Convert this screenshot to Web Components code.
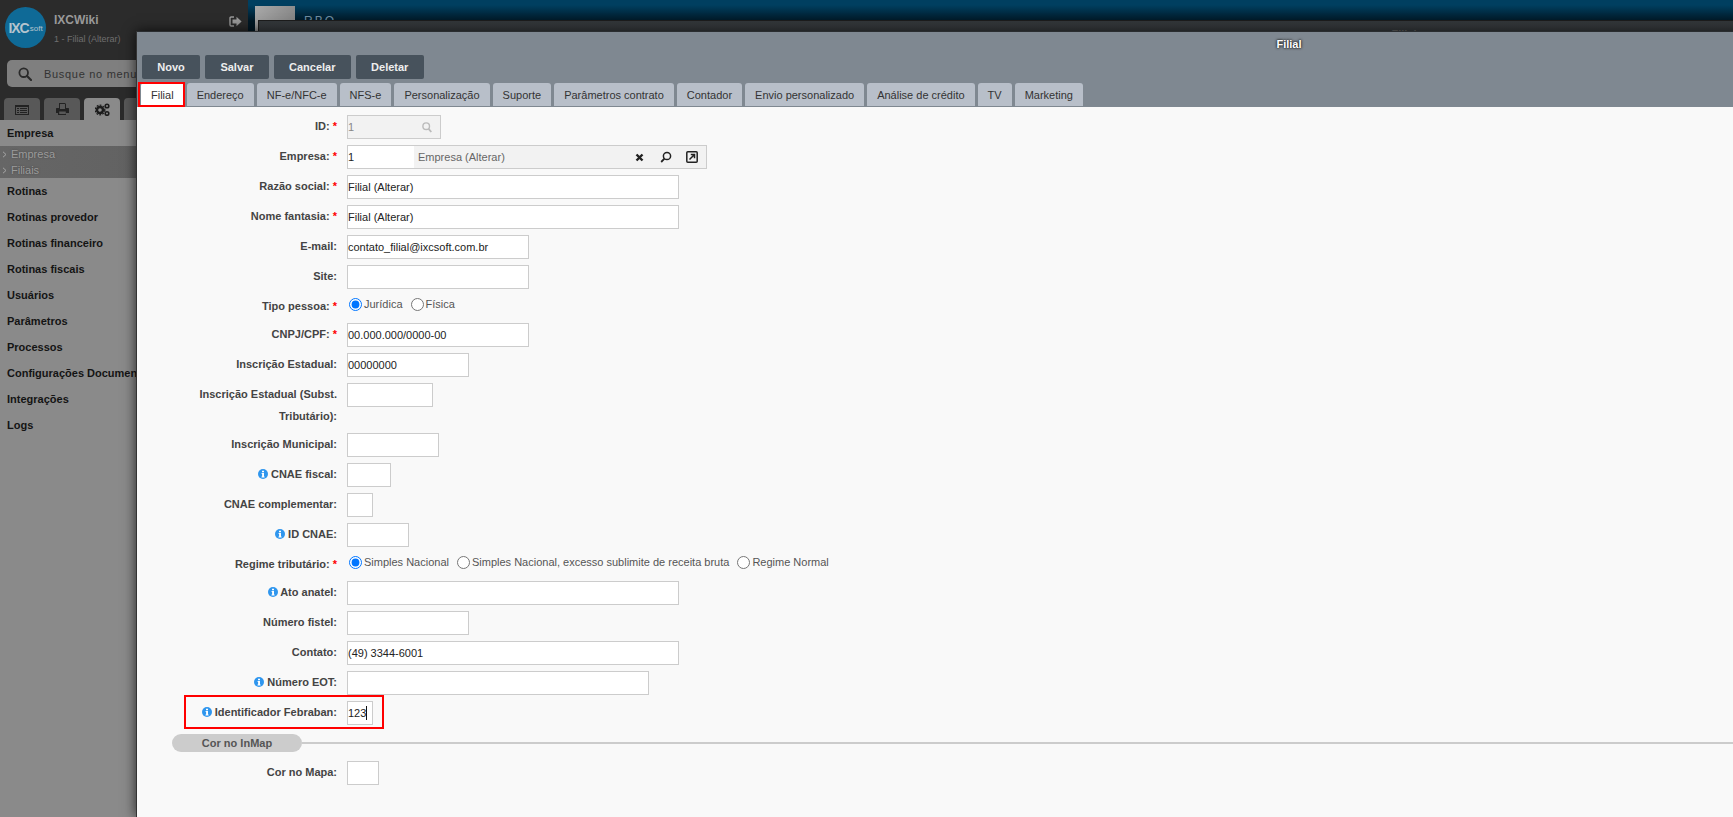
<!DOCTYPE html>
<html lang="pt-BR">
<head>
<meta charset="utf-8">
<title>Filial</title>
<style>
  html, body { margin: 0; height: 100%; overflow: hidden; background: #8a8a8a; }
  body { font: 11px "Liberation Sans", Arial, sans-serif; color: #333; display: flex; position: relative; }
</style>
</head>
<body>
<ixc-sidebar>
  <ixc-nav-item>Empresa</ixc-nav-item>
  <ixc-sub-list>
    <ixc-sub-item>Empresa</ixc-sub-item>
    <ixc-sub-item>Filiais</ixc-sub-item>
  </ixc-sub-list>
  <ixc-nav-item>Rotinas</ixc-nav-item>
  <ixc-nav-item>Rotinas provedor</ixc-nav-item>
  <ixc-nav-item>Rotinas financeiro</ixc-nav-item>
  <ixc-nav-item>Rotinas fiscais</ixc-nav-item>
  <ixc-nav-item>Usuários</ixc-nav-item>
  <ixc-nav-item>Parâmetros</ixc-nav-item>
  <ixc-nav-item>Processos</ixc-nav-item>
  <ixc-nav-item>Configurações Documentos</ixc-nav-item>
  <ixc-nav-item>Integrações</ixc-nav-item>
  <ixc-nav-item>Logs</ixc-nav-item>
</ixc-sidebar>
<ixc-topbar></ixc-topbar>
<ixc-back-window></ixc-back-window>

<ixc-dialog title="Filial">
  <ixc-button slot="actions">Novo</ixc-button>
  <ixc-button slot="actions">Salvar</ixc-button>
  <ixc-button slot="actions">Cancelar</ixc-button>
  <ixc-button slot="actions">Deletar</ixc-button>

  <ixc-tab slot="tabs" active>Filial</ixc-tab>
  <ixc-tab slot="tabs">Endereço</ixc-tab>
  <ixc-tab slot="tabs">NF-e/NFC-e</ixc-tab>
  <ixc-tab slot="tabs">NFS-e</ixc-tab>
  <ixc-tab slot="tabs">Personalização</ixc-tab>
  <ixc-tab slot="tabs">Suporte</ixc-tab>
  <ixc-tab slot="tabs">Parâmetros contrato</ixc-tab>
  <ixc-tab slot="tabs">Contador</ixc-tab>
  <ixc-tab slot="tabs">Envio personalizado</ixc-tab>
  <ixc-tab slot="tabs">Análise de crédito</ixc-tab>
  <ixc-tab slot="tabs">TV</ixc-tab>
  <ixc-tab slot="tabs">Marketing</ixc-tab>

  <ixc-row label="ID:" required><ixc-field w="94" readonly search>1</ixc-field></ixc-row>
  <ixc-row label="Empresa:" required><ixc-lookup code="1">Empresa (Alterar)</ixc-lookup></ixc-row>
  <ixc-row label="Razão social:" required><ixc-field w="332">Filial (Alterar)</ixc-field></ixc-row>
  <ixc-row label="Nome fantasia:" required><ixc-field w="332">Filial (Alterar)</ixc-field></ixc-row>
  <ixc-row label="E-mail:"><ixc-field w="182">contato_filial@ixcsoft.com.br</ixc-field></ixc-row>
  <ixc-row label="Site:"><ixc-field w="182"></ixc-field></ixc-row>
  <ixc-row label="Tipo pessoa:" required>
    <ixc-radio name="tipo" checked>Jurídica</ixc-radio>
    <ixc-radio name="tipo">Física</ixc-radio>
  </ixc-row>
  <ixc-row label="CNPJ/CPF:" required><ixc-field w="182">00.000.000/0000-00</ixc-field></ixc-row>
  <ixc-row label="Inscrição Estadual:"><ixc-field w="122">00000000</ixc-field></ixc-row>
  <ixc-row label="Inscrição Estadual (Subst. Tributário):"><ixc-field w="86"></ixc-field></ixc-row>
  <ixc-row label="Inscrição Municipal:"><ixc-field w="92"></ixc-field></ixc-row>
  <ixc-row label="CNAE fiscal:" info><ixc-field w="44"></ixc-field></ixc-row>
  <ixc-row label="CNAE complementar:"><ixc-field w="26"></ixc-field></ixc-row>
  <ixc-row label="ID CNAE:" info><ixc-field w="62"></ixc-field></ixc-row>
  <ixc-row label="Regime tributário:" required>
    <ixc-radio name="regime" checked>Simples Nacional</ixc-radio>
    <ixc-radio name="regime">Simples Nacional, excesso sublimite de receita bruta</ixc-radio>
    <ixc-radio name="regime">Regime Normal</ixc-radio>
  </ixc-row>
  <ixc-row label="Ato anatel:" info><ixc-field w="332"></ixc-field></ixc-row>
  <ixc-row label="Número fistel:"><ixc-field w="122"></ixc-field></ixc-row>
  <ixc-row label="Contato:"><ixc-field w="332">(49) 3344-6001</ixc-field></ixc-row>
  <ixc-row label="Número EOT:" info><ixc-field w="302"></ixc-field></ixc-row>
  <ixc-row label="Identificador Febraban:" info marked><ixc-field w="26" caret>123</ixc-field></ixc-row>
  <ixc-section>Cor no InMap</ixc-section>
  <ixc-row label="Cor no Mapa:"><ixc-field w="32"></ixc-field></ixc-row>
</ixc-dialog>

<script>
// small helper so every component is written the same way
function shadow(el, html) {
  if (el.shadowRoot) return;
  el.attachShadow({ mode: "open" }).innerHTML = html;
}

class IxcSidebar extends HTMLElement {
  connectedCallback() {
    shadow(this, `
      <style>
        :host { display: block; width: 248px; flex: none; height: 100%; background: #8a8a8a; }
        .top { background: #2b2b2b; height: 120px; display: flex; flex-direction: column; }
        .brand { display: flex; height: 60px; padding-left: 5px; box-sizing: border-box; }
        .logo { width: 41px; height: 41px; margin-top: 7px; border-radius: 50%; background: #0f6a97; flex: none;
                display: flex; align-items: center; justify-content: center; color: #b4c4ce; }
        .logo b { font-size: 14px; letter-spacing: -1px; margin-right: 1px; }
        .logo span { font-size: 8px; margin-top: 2px; }
        .who { margin-left: 8px; }
        .who b { display: block; font-size: 12px; color: #999; margin-top: 13px; line-height: 14px; }
        .who span { display: block; font-size: 9px; color: #6f6f6f; margin-top: 6px; line-height: 12px; }
        .out { margin: 16px 6px 0 auto; }
        .search { margin-left: 7px; height: 27px; width: 230px; background: #7f7f7f; border-radius: 5px;
                  display: flex; align-items: center; color: #333; letter-spacing: .7px; flex: none; }
        .search svg { margin: 0 12px 0 11px; }
        .tabs { display: flex; gap: 4px; margin: 11px 0 0 4px; height: 22px; }
        .tabs div { width: 36px; background: #585858; border-radius: 4px 4px 0 0; display: flex; align-items: center; justify-content: center; }
        .tabs div.on { background: #8a8a8a; }
      </style>
      <div class="top">
        <div class="brand">
          <div class="logo"><b>IXC</b><span>soft</span></div>
          <div class="who"><b>IXCWiki</b><span>1 - Filial (Alterar)</span></div>
          <svg class="out" width="13" height="11" viewBox="0 0 13 11">
            <path d="M5 1H2.2Q1 1 1 2.2V8.8Q1 10 2.2 10H5" fill="none" stroke="#999" stroke-width="1.4"/>
            <path d="M3.5 3.5H7.5V.8L12.6 5.5 7.5 10.2V7.5H3.5Z" fill="#999"/>
          </svg>
        </div>
        <div class="search">
          <svg width="14" height="14" viewBox="0 0 14 14"><circle cx="5.7" cy="5.7" r="4.3" fill="none" stroke="#2a2a2a" stroke-width="1.8"/><path d="M9 9l4 4" stroke="#2a2a2a" stroke-width="2.2" stroke-linecap="round"/></svg>
          Busque no menu
        </div>
        <div class="tabs">
          <div><svg width="14" height="11" viewBox="0 0 14 11"><path fill="#222" fill-rule="evenodd" d="M0 1h14v10H0zM1 3v7h12V3zM2 4h2v1H2zM5 4h7v1H5zM2 6h2v1H2zM5 6h7v1H5zM2 8h2v1H2zM5 8h7v1H5z"/></svg></div>
          <div><svg width="13" height="12" viewBox="0 0 13 12"><path fill="#222" fill-rule="evenodd" d="M3 0h6l1 1v4h2.5l.5.5V10h-3v2H2v-2H0V5.500L.5 5H3zM4 1v5h5V1zM3.200 8.500V11h6.600V8.500z"/></svg></div>
          <div class="on"><svg width="15" height="13" viewBox="0 0 15 13"><circle cx="5" cy="7" r="3" fill="none" stroke="#1c1c1c" stroke-width="2.4"/><circle cx="5" cy="7" r="4.800" fill="none" stroke="#1c1c1c" stroke-width="1.300" stroke-dasharray="1.800 1.300"/><circle cx="12" cy="3" r="1.800" fill="none" stroke="#1c1c1c" stroke-width="1.600"/><circle cx="12" cy="10.500" r="1.800" fill="none" stroke="#1c1c1c" stroke-width="1.600"/></svg></div>
          <div></div>
        </div>
      </div>
      <slot></slot>`);
  }
}

class IxcNavItem extends HTMLElement {
  connectedCallback() {
    shadow(this, `
      <style>
        :host { display: block; height: 26px; line-height: 26px; padding-left: 7px; font-weight: bold; color: #141414; white-space: nowrap; }
      </style>
      <slot></slot>`);
  }
}

class IxcSubList extends HTMLElement {
  connectedCallback() {
    shadow(this, `
      <style>
        :host { display: block; height: 32px; background: linear-gradient(90deg, #666 0, #5f5f5f 100%); }
      </style>
      <slot></slot>`);
  }
}

class IxcSubItem extends HTMLElement {
  connectedCallback() {
    shadow(this, `
      <style>
        :host { display: flex; align-items: center; height: 16px; color: #9c9c9c; text-shadow: 0 0 2px #444; }
        svg { margin: 0 4px 0 2px; }
      </style>
      <svg width="5" height="7" viewBox="0 0 5 7"><path d="M1 .8L4 3.500 1 6.200" fill="none" stroke="#a5a5a5"/></svg>
      <slot></slot>`);
  }
}

class IxcTopbar extends HTMLElement {
  connectedCallback() {
    shadow(this, `
      <style>
        :host { display: block; flex: 1; height: 31px; background: linear-gradient(#003f60 0, #003f60 5px, #001825 21px); overflow: hidden; }
        .inner { display: flex; padding: 6px 0 0 7px; }
        .pic { width: 40px; height: 30px; background: linear-gradient(135deg, #aaa, #777); }
        .name { margin: 8px 0 0 9px; color: #6d8ba0; font-size: 12px; letter-spacing: 2px; }
      </style>
      <div class="inner"><div class="pic"></div><div class="name">RBO —</div></div>`);
  }
}

// the window behind the open one, only its title bar shows
class IxcBackWindow extends HTMLElement {
  connectedCallback() {
    shadow(this, `
      <style>
        :host { position: absolute; left: 258px; top: 20px; width: 2292px; height: 40px; box-sizing: border-box;
                background: linear-gradient(#33373a, #44484c); border: 1px solid #1c1c1c; text-align: center;
                color: #666; font-weight: bold; padding-top: 7px; }
      </style>
      Filial`);
  }
}

class IxcDialog extends HTMLElement {
  connectedCallback() {
    shadow(this, `
      <style>
        :host { position: absolute; left: 136px; top: 31px; width: 2304px; bottom: 0; display: flex; flex-direction: column;
                background: #f9f9f9; border-left: 1px solid #333; box-shadow: 0 0 12px rgba(0,0,0,.75); }
        header { background: #7f8891; height: 76px; flex: none; box-sizing: border-box; border-top: 1px solid #2a2d30; }
        h1 { margin: 0; height: 23px; line-height: 24px; text-align: center; font-size: 11px; color: #fff; text-shadow: 0 0 2px #111, 0 0 3px #222; }
        .actions { display: flex; gap: 5px; margin-left: 5px; height: 24px; }
        .tabs { display: flex; gap: 3px; margin: 4px 0 0 4px; height: 24px; }
        .form { padding-top: 8px; }
      </style>
      <header>
        <h1>${this.getAttribute("title")}</h1>
        <div class="actions"><slot name="actions"></slot></div>
        <div class="tabs"><slot name="tabs"></slot></div>
      </header>
      <div class="form"><slot></slot></div>`);
  }
}

class IxcButton extends HTMLElement {
  connectedCallback() {
    shadow(this, `
      <style>
        :host { display: block; padding: 0 15.3px; line-height: 24px; background: #47525c; color: #eee; font-weight: bold; border-radius: 2px; }
      </style>
      <slot></slot>`);
  }
}

class IxcTab extends HTMLElement {
  connectedCallback() {
    shadow(this, `
      <style>
        :host { display: block; position: relative; padding: 0 10px; height: 23px; line-height: 24px; background: #b8bfc9; color: #333; border-radius: 3px 3px 0 0; }
        :host([active]) { background: #fff; height: 24px; }
        :host([active])::after { content: ""; position: absolute; left: -3px; right: -1px; top: -1px; bottom: 0; border: 2px solid #f00; }
      </style>
      <slot></slot>`);
  }
}

class IxcRow extends HTMLElement {
  connectedCallback() {
    const star = this.hasAttribute("required") ? ' <i>*</i>' : "";
    const info = this.hasAttribute("info")
      ? `<svg width="10" height="10" viewBox="0 0 10 10"><circle cx="5" cy="5" r="5" fill="#2f96ee"/><path fill="#fff" d="M4 1.700h2v1.500H4zM3.600 4h2.400v3.600h.6v1H3.500v-1h.6V5h-.5z"/></svg> `
      : "";
    shadow(this, `
      <style>
        :host { display: grid; grid-template-columns: 190px 1fr; column-gap: 10px; padding-left: 10px; margin-bottom: 6px; position: relative; }
        label { text-align: right; font-weight: bold; line-height: 22px; color: #444; }
        label i { color: #f00; font-style: normal; }
        svg { vertical-align: -1px; }
        .value { display: flex; align-items: flex-start; min-height: 22px; }
        .mark { position: absolute; left: 47px; top: -6px; width: 196px; height: 30px; border: 2px solid #f00; }
      </style>
      <label>${info}${this.getAttribute("label")}${star}</label>
      <div class="value"><slot></slot></div>
      ${this.hasAttribute("marked") ? '<div class="mark"></div>' : ""}`);
  }
}

class IxcField extends HTMLElement {
  connectedCallback() {
    const w = this.getAttribute("w");
    shadow(this, `
      <style>
        :host { display: flex; align-items: center; width: ${w}px; height: 24px; box-sizing: border-box; background: #fff;
                border: 1px solid #ccc; color: #222; }
        :host([readonly]) { background: #f2f2f2; color: #888; }
        svg { margin-left: auto; margin-right: 8px; }
        .caret { width: 1px; height: 14px; background: #111; }
      </style>
      <slot></slot>
      ${this.hasAttribute("caret") ? '<span class="caret"></span>' : ""}
      ${this.hasAttribute("search") ? '<svg width="10" height="11" viewBox="0 0 10 11"><circle cx="4.200" cy="4.200" r="3.300" fill="none" stroke="#bbb" stroke-width="1.400"/><path d="M6.600 6.800L9.300 10" stroke="#bbb" stroke-width="1.800"/></svg>' : ""}`);
  }
}

class IxcLookup extends HTMLElement {
  connectedCallback() {
    shadow(this, `
      <style>
        :host { display: flex; align-items: center; width: 360px; height: 24px; box-sizing: border-box; background: #f2f2f2; border: 1px solid #ccc; color: #666; }
        .code { width: 66px; height: 100%; background: #fff; color: #222; line-height: 22px; box-sizing: border-box; margin-right: 4px; }
        .icons { margin-left: auto; display: flex; align-items: center; gap: 14px; padding-right: 8px; }
        .close { margin-right: 2px; }
      </style>
      <div class="code">${this.getAttribute("code")}</div>
      <slot></slot>
      <div class="icons">
        <svg class="close" width="9" height="9" viewBox="0 0 9 9"><path d="M1.500 1.500l6 6M7.500 1.500l-6 6" stroke="#222" stroke-width="2.400"/></svg>
        <svg width="12" height="12" viewBox="0 0 12 12"><circle cx="7" cy="5" r="3.600" fill="none" stroke="#222" stroke-width="1.500"/><path d="M4.400 7.700L1.200 11" stroke="#222" stroke-width="1.800"/></svg>
        <svg width="12" height="12" viewBox="0 0 12 12"><rect x=".8" y=".8" width="10.400" height="10.400" rx="1" fill="none" stroke="#222" stroke-width="1.500"/><path d="M3.500 8.500L8 4M4.800 3.500h3.700v3.700" fill="none" stroke="#222" stroke-width="1.500"/></svg>
      </div>`);
  }
}

class IxcRadio extends HTMLElement {
  connectedCallback() {
    shadow(this, `
      <style>
        :host { display: flex; align-items: center; height: 18px; margin-left: 2px; margin-right: 6px; color: #555; }
        input { margin: 0 2px 0 0; width: 13px; height: 13px; }
      </style>
      <input type="radio" ${this.hasAttribute("checked") ? "checked" : ""}><slot></slot>`);
  }
}

class IxcSection extends HTMLElement {
  connectedCallback() {
    shadow(this, `
      <style>
        :host { display: flex; align-items: center; margin: 9px 0 9px 35px; height: 18px; }
        .pill { width: 130px; height: 18px; line-height: 18px; border-radius: 9px; background: #ccc; color: #555; font-weight: bold; text-align: center; flex: none; }
        .line { flex: 1; height: 2px; background: #ccc; }
      </style>
      <div class="pill"><slot></slot></div><div class="line"></div>`);
  }
}

customElements.define("ixc-sidebar", IxcSidebar);
customElements.define("ixc-nav-item", IxcNavItem);
customElements.define("ixc-sub-list", IxcSubList);
customElements.define("ixc-sub-item", IxcSubItem);
customElements.define("ixc-topbar", IxcTopbar);
customElements.define("ixc-back-window", IxcBackWindow);
customElements.define("ixc-dialog", IxcDialog);
customElements.define("ixc-button", IxcButton);
customElements.define("ixc-tab", IxcTab);
customElements.define("ixc-row", IxcRow);
customElements.define("ixc-field", IxcField);
customElements.define("ixc-lookup", IxcLookup);
customElements.define("ixc-radio", IxcRadio);
customElements.define("ixc-section", IxcSection);
</script>
</body>
</html>
